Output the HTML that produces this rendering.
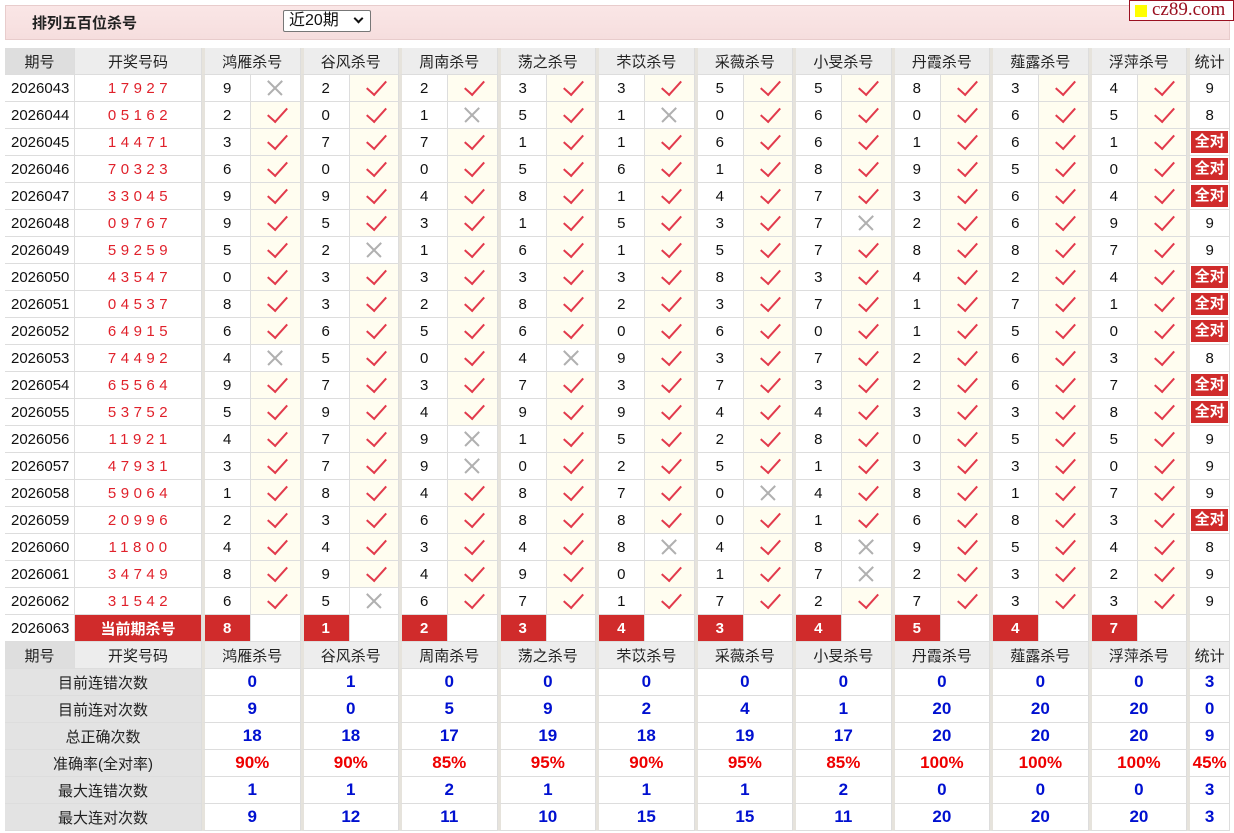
<!DOCTYPE html>
<html><head><meta charset="utf-8">
<style>
*{box-sizing:border-box}
body{margin:0;width:1234px;height:833px;background:#fff;font-family:"Liberation Sans","Noto Sans CJK SC",sans-serif;position:relative;overflow:hidden}
.bar{position:absolute;left:5px;top:5px;width:1225px;height:35px;background:linear-gradient(#fae6e6,#f6dede);border:1px solid #e8cccc}
.bar b{position:absolute;left:26px;top:6px;font-size:15px;color:#222}
.sel{position:absolute;left:277px;top:4px;width:88px;height:22px;border:1px solid #777;border-radius:2px;background:#fff;font-size:16px;padding-left:5px;line-height:20px;color:#111}
.sel i{position:absolute;right:8px;top:4px;width:7px;height:7px;border-right:2px solid #111;border-bottom:2px solid #111;transform:rotate(45deg)}
.logo{position:absolute;left:1129px;top:0;width:105px;height:21px;border:1px solid #9a1020;background:#fff;color:#9a1020;font-family:"Liberation Serif",serif;font-size:19px;line-height:18px;padding-left:22px}
.logo i{position:absolute;left:5px;top:4px;width:12px;height:12px;background:#ff0}
table{position:absolute;left:5px;top:48px;border-collapse:separate;border-spacing:0;table-layout:fixed;width:1225px}
td{height:27px;padding:0;text-align:center;font-size:15px;color:#111;border-right:1px solid #ddd;border-bottom:1px solid #ddd;white-space:nowrap;position:relative}
td.q{text-align:left;padding-left:6px}
tr.h td{background:#ededed;color:#222}
tr.h td:first-child{background:#dedede}
td.n{color:#e0212b;letter-spacing:4.5px;padding-left:4px}
td.g{border-left:3px solid #e6e3dc;text-align:left;padding-left:18px}
td.s{border-left:3px solid #e6e3dc}
td.v{background:#fffdf0}
td.v:after{content:"";position:absolute;left:21px;top:1px;width:9px;height:17px;border-right:2.5px solid #e23a4c;border-bottom:2.5px solid #e23a4c;transform:rotate(42deg)}
td.x:before,td.x:after{content:"";position:absolute;left:14px;top:12px;width:20px;height:1.6px;background:#b0b0b0;transform:rotate(45deg)}
td.x:after{transform:rotate(-45deg)}
td.a{padding:2px 1px 2px 1px}
td.a span{display:block;background:#d02b2b;color:#fff;font-weight:bold;height:22px;line-height:22px}
td.r{background:#d02b2b;color:#fff;font-weight:bold}
td.k{background:#e3e3e3;color:#222}
td.b{color:#0010d0;font-weight:bold;font-size:17px}
td.p{color:#e00;font-weight:bold;font-size:17px}
</style></head><body>
<div class="bar"><b>排列五百位杀号</b><div class="sel">近20期<i></i></div></div>
<div class="logo"><i></i>cz89.com</div>
<table>
<colgroup><col style="width:70px"><col style="width:127px">
<col style="width:49px"><col style="width:49.5px"><col style="width:49px"><col style="width:49.5px"><col style="width:49px"><col style="width:49.5px"><col style="width:49px"><col style="width:49.5px"><col style="width:49px"><col style="width:49.5px"><col style="width:49px"><col style="width:49.5px"><col style="width:49px"><col style="width:49.5px"><col style="width:49px"><col style="width:49.5px"><col style="width:49px"><col style="width:49.5px"><col style="width:49px"><col style="width:49.5px">
<col style="width:43px"></colgroup>
<tr class="h"><td>期号</td><td>开奖号码</td><td class="s" colspan="2">鸿雁杀号</td><td class="s" colspan="2">谷风杀号</td><td class="s" colspan="2">周南杀号</td><td class="s" colspan="2">荡之杀号</td><td class="s" colspan="2">芣苡杀号</td><td class="s" colspan="2">采薇杀号</td><td class="s" colspan="2">小旻杀号</td><td class="s" colspan="2">丹霞杀号</td><td class="s" colspan="2">薤露杀号</td><td class="s" colspan="2">浮萍杀号</td><td class="s">统计</td></tr>
<tr><td class="q">2026043</td><td class="n">17927</td><td class="g">9</td><td class="x"></td><td class="g">2</td><td class="v"></td><td class="g">2</td><td class="v"></td><td class="g">3</td><td class="v"></td><td class="g">3</td><td class="v"></td><td class="g">5</td><td class="v"></td><td class="g">5</td><td class="v"></td><td class="g">8</td><td class="v"></td><td class="g">3</td><td class="v"></td><td class="g">4</td><td class="v"></td><td class="s">9</td></tr>
<tr><td class="q">2026044</td><td class="n">05162</td><td class="g">2</td><td class="v"></td><td class="g">0</td><td class="v"></td><td class="g">1</td><td class="x"></td><td class="g">5</td><td class="v"></td><td class="g">1</td><td class="x"></td><td class="g">0</td><td class="v"></td><td class="g">6</td><td class="v"></td><td class="g">0</td><td class="v"></td><td class="g">6</td><td class="v"></td><td class="g">5</td><td class="v"></td><td class="s">8</td></tr>
<tr><td class="q">2026045</td><td class="n">14471</td><td class="g">3</td><td class="v"></td><td class="g">7</td><td class="v"></td><td class="g">7</td><td class="v"></td><td class="g">1</td><td class="v"></td><td class="g">1</td><td class="v"></td><td class="g">6</td><td class="v"></td><td class="g">6</td><td class="v"></td><td class="g">1</td><td class="v"></td><td class="g">6</td><td class="v"></td><td class="g">1</td><td class="v"></td><td class="s a"><span>全对</span></td></tr>
<tr><td class="q">2026046</td><td class="n">70323</td><td class="g">6</td><td class="v"></td><td class="g">0</td><td class="v"></td><td class="g">0</td><td class="v"></td><td class="g">5</td><td class="v"></td><td class="g">6</td><td class="v"></td><td class="g">1</td><td class="v"></td><td class="g">8</td><td class="v"></td><td class="g">9</td><td class="v"></td><td class="g">5</td><td class="v"></td><td class="g">0</td><td class="v"></td><td class="s a"><span>全对</span></td></tr>
<tr><td class="q">2026047</td><td class="n">33045</td><td class="g">9</td><td class="v"></td><td class="g">9</td><td class="v"></td><td class="g">4</td><td class="v"></td><td class="g">8</td><td class="v"></td><td class="g">1</td><td class="v"></td><td class="g">4</td><td class="v"></td><td class="g">7</td><td class="v"></td><td class="g">3</td><td class="v"></td><td class="g">6</td><td class="v"></td><td class="g">4</td><td class="v"></td><td class="s a"><span>全对</span></td></tr>
<tr><td class="q">2026048</td><td class="n">09767</td><td class="g">9</td><td class="v"></td><td class="g">5</td><td class="v"></td><td class="g">3</td><td class="v"></td><td class="g">1</td><td class="v"></td><td class="g">5</td><td class="v"></td><td class="g">3</td><td class="v"></td><td class="g">7</td><td class="x"></td><td class="g">2</td><td class="v"></td><td class="g">6</td><td class="v"></td><td class="g">9</td><td class="v"></td><td class="s">9</td></tr>
<tr><td class="q">2026049</td><td class="n">59259</td><td class="g">5</td><td class="v"></td><td class="g">2</td><td class="x"></td><td class="g">1</td><td class="v"></td><td class="g">6</td><td class="v"></td><td class="g">1</td><td class="v"></td><td class="g">5</td><td class="v"></td><td class="g">7</td><td class="v"></td><td class="g">8</td><td class="v"></td><td class="g">8</td><td class="v"></td><td class="g">7</td><td class="v"></td><td class="s">9</td></tr>
<tr><td class="q">2026050</td><td class="n">43547</td><td class="g">0</td><td class="v"></td><td class="g">3</td><td class="v"></td><td class="g">3</td><td class="v"></td><td class="g">3</td><td class="v"></td><td class="g">3</td><td class="v"></td><td class="g">8</td><td class="v"></td><td class="g">3</td><td class="v"></td><td class="g">4</td><td class="v"></td><td class="g">2</td><td class="v"></td><td class="g">4</td><td class="v"></td><td class="s a"><span>全对</span></td></tr>
<tr><td class="q">2026051</td><td class="n">04537</td><td class="g">8</td><td class="v"></td><td class="g">3</td><td class="v"></td><td class="g">2</td><td class="v"></td><td class="g">8</td><td class="v"></td><td class="g">2</td><td class="v"></td><td class="g">3</td><td class="v"></td><td class="g">7</td><td class="v"></td><td class="g">1</td><td class="v"></td><td class="g">7</td><td class="v"></td><td class="g">1</td><td class="v"></td><td class="s a"><span>全对</span></td></tr>
<tr><td class="q">2026052</td><td class="n">64915</td><td class="g">6</td><td class="v"></td><td class="g">6</td><td class="v"></td><td class="g">5</td><td class="v"></td><td class="g">6</td><td class="v"></td><td class="g">0</td><td class="v"></td><td class="g">6</td><td class="v"></td><td class="g">0</td><td class="v"></td><td class="g">1</td><td class="v"></td><td class="g">5</td><td class="v"></td><td class="g">0</td><td class="v"></td><td class="s a"><span>全对</span></td></tr>
<tr><td class="q">2026053</td><td class="n">74492</td><td class="g">4</td><td class="x"></td><td class="g">5</td><td class="v"></td><td class="g">0</td><td class="v"></td><td class="g">4</td><td class="x"></td><td class="g">9</td><td class="v"></td><td class="g">3</td><td class="v"></td><td class="g">7</td><td class="v"></td><td class="g">2</td><td class="v"></td><td class="g">6</td><td class="v"></td><td class="g">3</td><td class="v"></td><td class="s">8</td></tr>
<tr><td class="q">2026054</td><td class="n">65564</td><td class="g">9</td><td class="v"></td><td class="g">7</td><td class="v"></td><td class="g">3</td><td class="v"></td><td class="g">7</td><td class="v"></td><td class="g">3</td><td class="v"></td><td class="g">7</td><td class="v"></td><td class="g">3</td><td class="v"></td><td class="g">2</td><td class="v"></td><td class="g">6</td><td class="v"></td><td class="g">7</td><td class="v"></td><td class="s a"><span>全对</span></td></tr>
<tr><td class="q">2026055</td><td class="n">53752</td><td class="g">5</td><td class="v"></td><td class="g">9</td><td class="v"></td><td class="g">4</td><td class="v"></td><td class="g">9</td><td class="v"></td><td class="g">9</td><td class="v"></td><td class="g">4</td><td class="v"></td><td class="g">4</td><td class="v"></td><td class="g">3</td><td class="v"></td><td class="g">3</td><td class="v"></td><td class="g">8</td><td class="v"></td><td class="s a"><span>全对</span></td></tr>
<tr><td class="q">2026056</td><td class="n">11921</td><td class="g">4</td><td class="v"></td><td class="g">7</td><td class="v"></td><td class="g">9</td><td class="x"></td><td class="g">1</td><td class="v"></td><td class="g">5</td><td class="v"></td><td class="g">2</td><td class="v"></td><td class="g">8</td><td class="v"></td><td class="g">0</td><td class="v"></td><td class="g">5</td><td class="v"></td><td class="g">5</td><td class="v"></td><td class="s">9</td></tr>
<tr><td class="q">2026057</td><td class="n">47931</td><td class="g">3</td><td class="v"></td><td class="g">7</td><td class="v"></td><td class="g">9</td><td class="x"></td><td class="g">0</td><td class="v"></td><td class="g">2</td><td class="v"></td><td class="g">5</td><td class="v"></td><td class="g">1</td><td class="v"></td><td class="g">3</td><td class="v"></td><td class="g">3</td><td class="v"></td><td class="g">0</td><td class="v"></td><td class="s">9</td></tr>
<tr><td class="q">2026058</td><td class="n">59064</td><td class="g">1</td><td class="v"></td><td class="g">8</td><td class="v"></td><td class="g">4</td><td class="v"></td><td class="g">8</td><td class="v"></td><td class="g">7</td><td class="v"></td><td class="g">0</td><td class="x"></td><td class="g">4</td><td class="v"></td><td class="g">8</td><td class="v"></td><td class="g">1</td><td class="v"></td><td class="g">7</td><td class="v"></td><td class="s">9</td></tr>
<tr><td class="q">2026059</td><td class="n">20996</td><td class="g">2</td><td class="v"></td><td class="g">3</td><td class="v"></td><td class="g">6</td><td class="v"></td><td class="g">8</td><td class="v"></td><td class="g">8</td><td class="v"></td><td class="g">0</td><td class="v"></td><td class="g">1</td><td class="v"></td><td class="g">6</td><td class="v"></td><td class="g">8</td><td class="v"></td><td class="g">3</td><td class="v"></td><td class="s a"><span>全对</span></td></tr>
<tr><td class="q">2026060</td><td class="n">11800</td><td class="g">4</td><td class="v"></td><td class="g">4</td><td class="v"></td><td class="g">3</td><td class="v"></td><td class="g">4</td><td class="v"></td><td class="g">8</td><td class="x"></td><td class="g">4</td><td class="v"></td><td class="g">8</td><td class="x"></td><td class="g">9</td><td class="v"></td><td class="g">5</td><td class="v"></td><td class="g">4</td><td class="v"></td><td class="s">8</td></tr>
<tr><td class="q">2026061</td><td class="n">34749</td><td class="g">8</td><td class="v"></td><td class="g">9</td><td class="v"></td><td class="g">4</td><td class="v"></td><td class="g">9</td><td class="v"></td><td class="g">0</td><td class="v"></td><td class="g">1</td><td class="v"></td><td class="g">7</td><td class="x"></td><td class="g">2</td><td class="v"></td><td class="g">3</td><td class="v"></td><td class="g">2</td><td class="v"></td><td class="s">9</td></tr>
<tr><td class="q">2026062</td><td class="n">31542</td><td class="g">6</td><td class="v"></td><td class="g">5</td><td class="x"></td><td class="g">6</td><td class="v"></td><td class="g">7</td><td class="v"></td><td class="g">1</td><td class="v"></td><td class="g">7</td><td class="v"></td><td class="g">2</td><td class="v"></td><td class="g">7</td><td class="v"></td><td class="g">3</td><td class="v"></td><td class="g">3</td><td class="v"></td><td class="s">9</td></tr>
<tr><td class="q">2026063</td><td class="r">当前期杀号</td><td class="g r">8</td><td></td><td class="g r">1</td><td></td><td class="g r">2</td><td></td><td class="g r">3</td><td></td><td class="g r">4</td><td></td><td class="g r">3</td><td></td><td class="g r">4</td><td></td><td class="g r">5</td><td></td><td class="g r">4</td><td></td><td class="g r">7</td><td></td><td class="s"></td></tr>
<tr class="h"><td>期号</td><td>开奖号码</td><td class="s" colspan="2">鸿雁杀号</td><td class="s" colspan="2">谷风杀号</td><td class="s" colspan="2">周南杀号</td><td class="s" colspan="2">荡之杀号</td><td class="s" colspan="2">芣苡杀号</td><td class="s" colspan="2">采薇杀号</td><td class="s" colspan="2">小旻杀号</td><td class="s" colspan="2">丹霞杀号</td><td class="s" colspan="2">薤露杀号</td><td class="s" colspan="2">浮萍杀号</td><td class="s">统计</td></tr>
<tr><td class="k" colspan="2">目前连错次数</td><td class="s b" colspan="2">0</td><td class="s b" colspan="2">1</td><td class="s b" colspan="2">0</td><td class="s b" colspan="2">0</td><td class="s b" colspan="2">0</td><td class="s b" colspan="2">0</td><td class="s b" colspan="2">0</td><td class="s b" colspan="2">0</td><td class="s b" colspan="2">0</td><td class="s b" colspan="2">0</td><td class="s b">3</td></tr>
<tr><td class="k" colspan="2">目前连对次数</td><td class="s b" colspan="2">9</td><td class="s b" colspan="2">0</td><td class="s b" colspan="2">5</td><td class="s b" colspan="2">9</td><td class="s b" colspan="2">2</td><td class="s b" colspan="2">4</td><td class="s b" colspan="2">1</td><td class="s b" colspan="2">20</td><td class="s b" colspan="2">20</td><td class="s b" colspan="2">20</td><td class="s b">0</td></tr>
<tr><td class="k" colspan="2">总正确次数</td><td class="s b" colspan="2">18</td><td class="s b" colspan="2">18</td><td class="s b" colspan="2">17</td><td class="s b" colspan="2">19</td><td class="s b" colspan="2">18</td><td class="s b" colspan="2">19</td><td class="s b" colspan="2">17</td><td class="s b" colspan="2">20</td><td class="s b" colspan="2">20</td><td class="s b" colspan="2">20</td><td class="s b">9</td></tr>
<tr><td class="k" colspan="2">准确率(全对率)</td><td class="s p" colspan="2">90%</td><td class="s p" colspan="2">90%</td><td class="s p" colspan="2">85%</td><td class="s p" colspan="2">95%</td><td class="s p" colspan="2">90%</td><td class="s p" colspan="2">95%</td><td class="s p" colspan="2">85%</td><td class="s p" colspan="2">100%</td><td class="s p" colspan="2">100%</td><td class="s p" colspan="2">100%</td><td class="s p">45%</td></tr>
<tr><td class="k" colspan="2">最大连错次数</td><td class="s b" colspan="2">1</td><td class="s b" colspan="2">1</td><td class="s b" colspan="2">2</td><td class="s b" colspan="2">1</td><td class="s b" colspan="2">1</td><td class="s b" colspan="2">1</td><td class="s b" colspan="2">2</td><td class="s b" colspan="2">0</td><td class="s b" colspan="2">0</td><td class="s b" colspan="2">0</td><td class="s b">3</td></tr>
<tr><td class="k" colspan="2">最大连对次数</td><td class="s b" colspan="2">9</td><td class="s b" colspan="2">12</td><td class="s b" colspan="2">11</td><td class="s b" colspan="2">10</td><td class="s b" colspan="2">15</td><td class="s b" colspan="2">15</td><td class="s b" colspan="2">11</td><td class="s b" colspan="2">20</td><td class="s b" colspan="2">20</td><td class="s b" colspan="2">20</td><td class="s b">3</td></tr>
</table>
</body></html>
